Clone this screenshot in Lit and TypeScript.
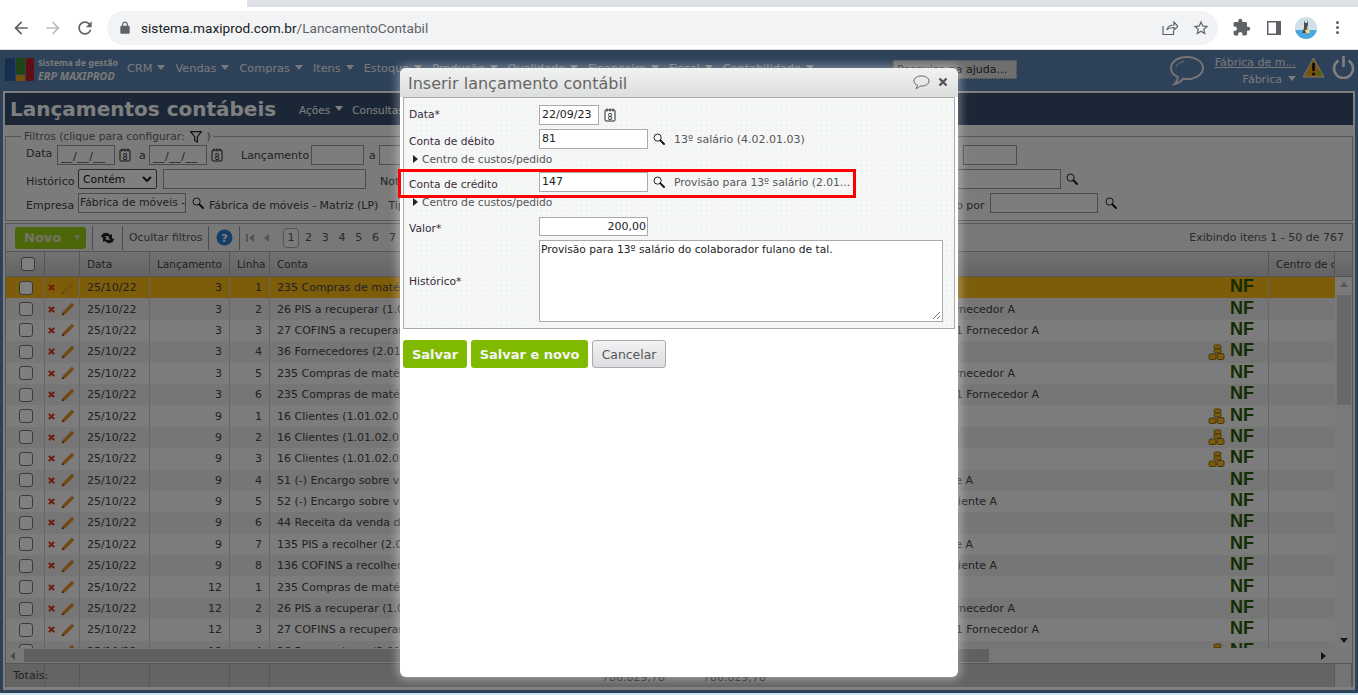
import { LitElement, html, css } from "lit";
import { customElement } from "lit/decorators.js";

type Row = { l: number; n: number; c: string; h?: string; e?: string; coin?: boolean };
const HF = "Compra de mercadoria NF 1 Fornecedor A";
const rows: Row[] = [
  { l: 3, n: 1, c: "235 Compras de matéria-prima" },
  { l: 3, n: 2, c: "26 PIS a recuperar (1.01.05.01)", h: HF, e: "e1" },
  { l: 3, n: 3, c: "27 COFINS a recuperar (1.01.05.02)", h: HF, e: "e2" },
  { l: 3, n: 4, c: "36 Fornecedores (2.01.01.01)", coin: true },
  { l: 3, n: 5, c: "235 Compras de matéria-prima", h: HF, e: "e1" },
  { l: 3, n: 6, c: "235 Compras de matéria-prima", h: HF, e: "e2" },
  { l: 9, n: 1, c: "16 Clientes (1.01.02.01)", coin: true },
  { l: 9, n: 2, c: "16 Clientes (1.01.02.01)", coin: true },
  { l: 9, n: 3, c: "16 Clientes (1.01.02.01)", coin: true },
  { l: 9, n: 4, c: "51 (-) Encargo sobre vendas", h: "Venda NF 2 Cliente A", e: "e3" },
  { l: 9, n: 5, c: "52 (-) Encargo sobre vendas", h: "Venda NF 2 Cliente A", e: "e4" },
  { l: 9, n: 6, c: "44 Receita da venda de produtos" },
  { l: 9, n: 7, c: "135 PIS a recolher (2.01.03.01)", h: "Venda NF 2 Cliente A", e: "e3" },
  { l: 9, n: 8, c: "136 COFINS a recolher (2.01.03.02)", h: "Venda NF 2 Cliente A", e: "e4" },
  { l: 12, n: 1, c: "235 Compras de matéria-prima" },
  { l: 12, n: 2, c: "26 PIS a recuperar (1.01.05.01)", h: HF, e: "e1" },
  { l: 12, n: 3, c: "27 COFINS a recuperar (1.01.05.02)", h: HF, e: "e2" },
  { l: 12, n: 4, c: "36 Fornecedores (2.01.01.01)", coin: true },
];

const search = () => html`<svg class="ico12" viewBox="0 0 12 14"><circle cx="4.600" cy="5.600" r="3.600" fill="#fff" fill-opacity=".35" stroke="#222" stroke-width="1"/><path d="M7.400 8.400l3.600 3.600" stroke="#111" stroke-width="1.900" stroke-linecap="round"/></svg>`;
const cal = () => html`<svg class="ico12" viewBox="0 0 12 14"><rect x="1" y="2" width="10" height="11" rx="1" fill="#fff" fill-opacity=".5" stroke="#222"/><path d="M3 .5v3M6 .5v3M9 .5v3" stroke="#222"/><text x="6" y="11.600" font-size="8" text-anchor="middle" font-family="DejaVu Sans" fill="#222">8</text></svg>`;
const pencil = () => html`<svg class="pen" viewBox="0 0 14 14"><path d="M10.800.8l2.400 2.400L4.200 12.200.8 13.200l1-3.400z" fill="#e8902a"/><path d="M.8 13.200l.7-2.400 1.700 1.700z" fill="#5a3a10"/></svg>`;
const cross = () => html`<svg class="x" viewBox="0 0 8 8"><path d="M1 1l6 6M7 1L1 7" stroke="#d83818" stroke-width="2.400"/></svg>`;
const coins = () => html`<svg class="coin" viewBox="0 0 17 17"><g fill="#f5b81c" stroke="#8a5c00" stroke-width=".9"><rect x="6" y="1" width="7" height="4" rx="1.500"/><rect x="6" y="5" width="7" height="4" rx="1.500"/><rect x="1" y="10" width="7" height="5.500" rx="1.500"/><rect x="9" y="9.500" width="7" height="6" rx="1.500"/></g></svg>`;

@customElement("app-root")
export class AppRoot extends LitElement {
  static styles = css`
    :host { display: block; width: 1358px; height: 695px; position: relative; overflow: hidden; background: #fff; font-family: "DejaVu Sans", sans-serif; font-size: 11px; color: #555; }
    * { box-sizing: border-box; }
    svg { display: block; flex: none; }
    .tabs { height: 7px; display: flex; }
    .tabs i { display: block; width: 247px; background: #fff; }
    .tabs b { display: block; flex: 1; background: #dee1e6; }
    .chrome { height: 43px; display: flex; align-items: center; padding: 0 0 1px 11px; background: #fff; border-bottom: 1px solid #dadce0; }
    .nb { width: 20px; height: 20px; fill: #5f6368; margin-right: 12px; }
    .nb.off { fill: #b9bcc0; }
    .omni { width: 1111px; height: 34px; border-radius: 17px; background: #f1f3f4; display: flex; align-items: center; padding-left: 12px; font: 13.650px Roboto, sans-serif; color: #202124; margin-right: 1px; }
    .omni .lock { width: 14px; height: 14px; fill: #5f6368; margin-right: 9px; margin-left: -1px; }
    .omni .path { color: #5f6368; }
    .omni .sp { flex: 1; }
    .omni .act { width: 18px; height: 18px; fill: #5f6368; }
    .a1 { margin-right: 14px; }
    .a2 { margin-right: 8px; }
    .ext { width: 19px; height: 19px; fill: #5f6368; margin-left: 13px; }
    .ava { width: 22px; height: 22px; border-radius: 50%; margin-left: 12px; background: linear-gradient(#cfe0ea 60%, #49a8dc 60%); display: flex; align-items: center; justify-content: center; }
    .kebab { margin-left: 19px; width: 4px; display: flex; flex-direction: column; gap: 2px; }
    .kebab i { display: block; width: 3px; height: 3px; border-radius: 50%; background: #5f6368; }

    .app { position: relative; height: 643px; background: #5a82b2; display: flex; flex-direction: column; overflow: hidden; }
    .pale { height: 2px; background: #cfe4ec; }
    .mask { position: absolute; inset: 0; background: rgba(0, 0, 0, .5); }

    .top { height: 41px; display: flex; align-items: flex-start; padding-left: 5px; flex: none; color: #f2f2f2; }
    .logo { width: 29px; height: 23px; margin-top: 8px; display: grid; grid-template-columns: 10px 9px 8px; column-gap: 1px; }
    .logo i { display: block; border-radius: 1px; }
    .lb { background: #2d5f9e; }
    .lg { display: grid !important; grid-template-rows: 16px 6px; row-gap: 1px; }
    .lg u { display: block; }
    .g1 { background: #3f8a2a; }
    .g2 { background: #e8a020; }
    .lr { background: #c02028; }
    .brand { margin-left: 4px; margin-top: 7px; width: 89px; color: #f2f2f2; font-family: "Noto Sans", sans-serif; font-weight: 700; line-height: 12px; white-space: nowrap; }
    .brand small { display: block; font-size: 8.800px; }
    .brand span { display: block; font-size: 10.700px; font-style: italic; margin-top: 1px; }
    .menu { display: flex; margin-top: 12px; font-size: 11.300px; white-space: nowrap; }
    .menu span { display: flex; align-items: center; gap: 5px; }
    .car { display: block; width: 0; height: 0; border: 4px solid transparent; border-top: 5px solid currentColor; border-bottom: 0; margin-top: -3px; }
    .mi { margin-right: 10px; }
    .helpbox { position: absolute; left: 893px; top: 10px; width: 124px; height: 19px; background: #ddd; border: 1px dotted #888; font-size: 11px; color: #333; padding-left: 3px; line-height: 17px; white-space: nowrap; overflow: hidden; }
    .topr { margin-left: auto; display: flex; align-items: flex-start; }
    .bub { width: 36px; height: 32px; margin-top: 5px; margin-left: 2px; }
    .fab { width: 84px; margin-left: 7px; margin-top: 4px; text-align: right; font-size: 11px; line-height: 17px; white-space: nowrap; }
    .fab u { display: block; }
    .fab span { display: flex; justify-content: flex-end; align-items: center; gap: 6px; }
    .warn { width: 23px; height: 21px; margin-left: 6px; margin-top: 7px; }
    .pow { width: 23px; height: 24px; margin-left: 7px; margin-right: 3px; margin-top: 5px; }

    .main { margin: 0 3px; height: 599px; background: #f6f7f6; border: 2px solid #fff; border-bottom-width: 3px; display: flex; flex-direction: column; flex: none; }
    .ttl { height: 32px; background: #364e6e; display: flex; align-items: center; flex: none; padding-left: 5px; color: #fff; white-space: nowrap; }
    .ttl h1 { margin: 0; font-size: 20px; font-weight: 700; width: 289px; color: #fff; }
    .ttl span { display: flex; align-items: center; gap: 5px; font-size: 10.500px; margin-right: 9px; padding-top: 1px; }
    fieldset { margin: 5px 0 0 0; padding: 0 0 7px 20px; height: 91px; border: 1px solid #aaa; flex: none; }
    legend { padding: 0 2px 0 3px; margin-left: -5px; margin-bottom: 2px; display: flex; align-items: center; gap: 5px; font-size: 10.700px; height: 13px; color: #666; white-space: nowrap; }
    .frow { display: flex; align-items: center; height: 20px; margin-bottom: 4px; white-space: nowrap; font-size: 11px; color: #444; }
    .t { display: block; }
    .up3 { margin-top: -4px; }
    .dn { margin-top: 5px; }
    .fi { display: block; height: 20px; border: 1px solid #999; background: #fafafa; color: #444; font-size: 10.800px; padding: 0 1px; line-height: 17px; overflow: hidden; white-space: nowrap; }
    .dt { padding: 2px 3px 0; letter-spacing: .6px; }
    .sel { display: flex; align-items: center; justify-content: space-between; border-color: #555; border-radius: 2px; background: #fff; color: #111; padding: 0 4px; }
    .w52 { width: 52px; } .w31 { width: 31px; } .w58 { width: 58px; } .w70 { width: 70px; } .w53 { width: 53px; } .w54 { width: 54px; } .w10 { width: 10px; } .w60 { width: 60px; } .w79 { width: 79px; } .w203 { width: 203px; } .w108 { width: 108px; } .w261 { width: 261px; } .w40 { width: 40px; }
    .m4 { margin-left: 4px; } .m5 { margin-left: 5px; } .m6 { margin-left: 6px; } .m7 { margin-left: 7px; } .m8 { margin-left: 8px; } .m10 { margin-left: 10px; } .m14 { margin-left: 14px; } .m18 { margin-left: 18px; } .m524 { margin-left: 524px; } .m380 { margin-left: 380px; }
    .ico12 { width: 12px; height: 14px; }
    .lanc { margin-left: 505px; margin-right: 5px; }

    .grid { flex: 1; margin-top: 2px; border: 1px solid #aaa; border-bottom: 0; min-height: 0; display: flex; flex-direction: column; }
    .bar { height: 28px; flex: none; display: flex; align-items: center; padding-left: 9px; font-size: 11px; color: #555; background: #f0f0f0; white-space: nowrap; border-bottom: 1px solid #aaa; }
    .novo { width: 71px; height: 22px; border-radius: 3px; background: #96ce14; color: #e7e7d0; font-weight: 700; font-size: 13px; display: flex; align-items: center; justify-content: space-between; padding: 0 6px 0 9px; margin-right: 6px; }
    .novo i { display: block; width: 0; height: 0; border: 3.500px solid transparent; border-top: 5px solid #d8d8b0; border-bottom: 0; }
    .sep { width: 1px; height: 24px; background: #999; flex: none; }
    .rf { width: 15px; height: 14px; margin: 0 7px; }
    .bar .of { padding: 0 6px; font-size: 10.800px; width: 85px; }
    .hp { width: 17px; height: 17px; margin: 0 6px 0 7px; }
    .pg { margin-left: 5px; width: 10px; height: 10px; fill: #aaa; }
    .pg2 { margin-left: 6px; margin-right: 12px; }
    .one { width: 16px; height: 20px; border: 1px solid #aaa; border-radius: 4px; text-align: center; line-height: 18px; background: #f4f4f4; margin-right: 1px; }
    .pn { width: 16.800px; text-align: center; }
    .exi { margin-left: auto; padding-right: 8px; color: #555; }

    .thead { height: 25px; flex: none; display: flex; background: linear-gradient(#e4e4e4, #c8c8cc); font-size: 10.500px; color: #444; border-bottom: 1px solid #aaa; }
    .c0 { width: 39px; } .c1 { width: 35px; } .c2 { width: 70px; } .c3 { width: 80px; } .c4 { width: 40px; } .c5 { width: 999px; } .c6 { width: 66px; } .c7 { width: 17px; }
    .cell { height: 100%; display: flex; align-items: center; border-right: 1px solid #aaa; flex: none; white-space: nowrap; overflow: hidden; }
    .pad { padding-left: 7px; }
    .ck { width: 14px; height: 14px; border: 1px solid #777; border-radius: 3px; background: #fff; margin-left: 13px; flex: none; }
    .thead .ck { margin-left: 15px; }
    .body { position: relative; height: 371px; flex: none; overflow: hidden; }
    .r { height: 21.400px; display: flex; font-size: 11px; color: #444; }
    .r.o { background: #fab814; }
    .r.a { background: #f9f9f8; }
    .r.b { background: #ebeceb; }
    .r .cell.c6 { border-right: 0; }
    .r .cell.nb-r { border-right: 1px solid #ccc; }
    .r.o .pen { opacity: .45; }
    .num { justify-content: flex-end; padding-right: 7px; }
    .x { width: 7px; height: 7px; margin-left: 3px; }
    .pen { width: 14px; height: 14px; margin-left: 6px; }
    .cc { width: 300px; flex: none; overflow: hidden; padding-left: 7px; }
    .hh { width: 600px; flex: none; text-align: right; overflow: hidden; }
    .e1 { padding-right: 155px; } .e2 { padding-right: 131px; } .e3 { padding-right: 197px; } .e4 { padding-right: 173px; }
    .cs { width: 60px; flex: none; display: flex; justify-content: flex-end; padding-right: 5px; }
    .coin { width: 17px; height: 17px; margin-top: 1px; }
    .nf { font: 700 18px/20px "Liberation Sans", sans-serif; color: #2a5a06; width: 30px; margin-top: -3px; }
    .vs { position: absolute; right: 0; top: 0; bottom: 0; width: 17px; background: #f4f4f4; display: flex; flex-direction: column; align-items: center; justify-content: space-between; padding: 5px 0; }
    .vs .th { position: absolute; left: 2px; top: 18px; width: 14px; height: 110px; background: #d0d0d0; }
    .tri { width: 0; height: 0; border: 4px solid transparent; }
    .tu { border-bottom: 5px solid #aaa; border-top: 0; }
    .td { border-top: 5px solid #333; border-bottom: 0; }
    .hs { height: 16px; flex: none; display: flex; align-items: center; background: #f0f0f0; border-bottom: 1px solid #aaa; padding: 0 4px; position: relative; }
    .hs .th { margin-left: 9px; width: 965px; height: 13px; background: #c0c0c0; }
    .tl { border-right: 5px solid #999; border-left: 0; }
    .tr { border-left: 5px solid #222; border-right: 0; margin-left: auto; margin-right: 22px; }
    .foot { flex: 1; display: flex; background: #c8c8c8; font-size: 11px; color: #444; }
    .foot .cell { border-right: 1px solid #b0b0b0; overflow: visible; }
    .footn { flex: 1; display: flex; padding-left: 332px; gap: 38px; align-items: center; padding-top: 3px; }
    .foot .c7 { width: 17px; background: #e8e8e8; margin-left: auto; }

    .modal { position: absolute; left: 400px; top: 18px; width: 558px; height: 609px; border-radius: 6px; background: #fff; box-shadow: 0 0 8px 3px rgba(255, 255, 255, .35); overflow: hidden; display: flex; flex-direction: column; }
    .mt { height: 29px; flex: none; padding: 6px 8px 0 8px; background: linear-gradient(#f1f2f2, #dcdddd); display: flex; font-size: 16px; color: #666; line-height: 20px; white-space: nowrap; align-items: flex-start; }
    .mt .sp { flex: 1; }
    .mt svg { margin-top: 1px; }
    .mbub { width: 17px; height: 15px; margin-right: 8px; }
    .mx { width: 10px; height: 10px; margin-top: 3px !important; margin-right: 2px; }
    .panel { margin: 0 3px; height: 232px; flex: none; border: 1px solid #aaa; background-color: #f5f7f7; background-image: radial-gradient(#e6eaea 0.600px, transparent 0.800px); background-size: 5px 5px; padding: 7px 11px 0 5px; color: #333; font-size: 11px; }
    .fr { display: flex; align-items: center; height: 20px; white-space: nowrap; }
    .fl { width: 130px; flex: none; color: #3a2a3a; font-size: 10.700px; padding-top: 4px; }
    .fl.up { padding-top: 0; margin-top: -1px; }
    .inp { display: block; height: 20px; border: 1px solid #aaa; background: #fff; color: #222; padding: 0 2px; line-height: 18px; font-size: 11px; }
    .i59 { width: 60px; } .i109 { width: 109px; }
    .rt { text-align: right; padding-right: 1px; }
    .h19 { height: 19px; }
    .fr .ico12 { margin-left: 5px; }
    .desc { margin-left: 9px; color: #555; }
    .d2 { font-size: 10.750px; }
    .cc2 { height: 14px; display: flex; align-items: center; gap: 4px; color: #555; padding-left: 4px; margin-top: 3px; font-size: 10.700px; }
    .cc2 i { display: block; width: 0; height: 0; border: 4px solid transparent; border-left: 5px solid #222; border-right: 0; }
    .g4 { margin-top: 4px; } .g6 { margin-top: 6px; } .g7 { margin-top: 7px; }
    .ta { width: 404px; height: 82px; border: 1px solid #aaa; background: #fff; color: #222; padding: 2px 1px; line-height: 14px; position: relative; font-size: 10.700px; }
    .ta svg { position: absolute; right: 1px; bottom: 1px; width: 9px; height: 9px; }
    .h82 { height: 82px; margin-top: 4px; }
    .h82 .fl { padding-top: 0; }
    .btns { display: flex; gap: 4px; margin: 11px 0 0 3px; }
    .bt { height: 28px; border-radius: 3px; background: #7fba00; color: #f4f4f4; font-weight: 700; font-size: 13px; display: flex; align-items: center; justify-content: center; }
    .b1 { width: 64px; } .b2 { width: 117px; }
    .b3 { width: 74px; background: linear-gradient(#f2f2f3, #dcdde0); border: 1px solid #aaa; color: #555; font-weight: 400; font-size: 12.400px; }
    .red { position: absolute; left: 398px; top: 169px; width: 458px; height: 29px; border: 3px solid #f00; }
  `;

  render() {
    return html`
      <div class="tabs"><i></i><b></b></div>
      <div class="chrome">
        <svg class="nb" viewBox="0 0 24 24"><path d="M20 11H7.830l5.590-5.590L12 4l-8 8 8 8 1.410-1.410L7.830 13H20v-2z"/></svg>
        <svg class="nb off" viewBox="0 0 24 24"><path d="M12 4l-1.410 1.410L16.170 11H4v2h12.170l-5.580 5.590L12 20l8-8z"/></svg>
        <svg class="nb" viewBox="0 0 24 24"><path d="M17.650 6.350C16.200 4.900 14.210 4 12 4c-4.420 0-7.990 3.580-7.990 8s3.570 8 7.990 8c3.730 0 6.840-2.550 7.730-6h-2.080c-.82 2.330-3.040 4-5.650 4-3.310 0-6-2.690-6-6s2.690-6 6-6c1.660 0 3.140.69 4.220 1.780L13 11h7V4l-2.350 2.350z"/></svg>
        <div class="omni">
          <svg class="lock" viewBox="0 0 24 24"><path d="M18 8h-1V6c0-2.760-2.240-5-5-5S7 3.240 7 6v2H6c-1.100 0-2 .9-2 2v10c0 1.100.9 2 2 2h12c1.100 0 2-.9 2-2V10c0-1.100-.9-2-2-2zM9 6c0-1.660 1.340-3 3-3s3 1.340 3 3v2H9V6z"/></svg>
          <span>sistema.maxiprod.com.br<span class="path">/LancamentoContabil</span></span>
          <span class="sp"></span>
          <svg class="act a1" viewBox="0 0 18 18"><path d="M3 7v8.500h10.500V12M7 11c.5-3 3-5 7-5V3l4 4.500L14 11V8.500c-3 0-5.500.5-7 2.500z" fill="none" stroke="#5f6368" stroke-width="1.200"/></svg>
          <svg class="act a2" viewBox="0 0 24 24"><path d="M22 9.240l-7.190-.62L12 2 9.190 8.630 2 9.240l5.460 4.730L5.820 21 12 17.270 18.180 21l-1.630-7.030L22 9.240zM12 15.400l-3.760 2.270 1-4.280-3.320-2.880 4.380-.38L12 6.100l1.710 4.040 4.380.38-3.320 2.880 1 4.280L12 15.400z"/></svg>
        </div>
        <svg class="ext" viewBox="0 0 24 24"><path d="M20.500 11H19V7c0-1.100-.9-2-2-2h-4V3.500C13 2.120 11.880 1 10.500 1S8 2.120 8 3.500V5H4c-1.100 0-1.990.9-1.990 2v3.800H3.500c1.490 0 2.700 1.210 2.700 2.700s-1.210 2.700-2.700 2.700H2V20c0 1.100.9 2 2 2h3.800v-1.500c0-1.490 1.210-2.700 2.700-2.700 1.490 0 2.700 1.210 2.700 2.700V22H17c1.100 0 2-.9 2-2v-4h1.500c1.380 0 2.500-1.120 2.500-2.500S21.880 11 20.500 11z"/></svg>
        <svg class="ext" viewBox="0 0 19 19"><path d="M3 3h14v14H3z" fill="#5f6368"/><path d="M4.500 4.500h7.500v11H4.500z" fill="#fff"/></svg>
        <div class="ava"><svg width="12" height="16" viewBox="0 0 12 16"><path d="M4 0l1 3h2l1-3v5l-1 3 3 5H2l2-5z" fill="#4d4d4d"/><path d="M5 10l4-1 1 4H6z" fill="#f3dc87"/></svg></div>
        <div class="kebab"><i></i><i></i><i></i></div>
      </div>
      <div class="app">
        <div class="top">
          <div class="logo">
            <i class="lb"></i>
            <i class="lg"><u class="g1"></u><u class="g2"></u></i>
            <i class="lr"></i>
          </div>
          <div class="brand"><small>Sistema de gestão</small><span>ERP MAXIPROD</span></div>
          <div class="menu">
            ${["CRM", "Vendas", "Compras", "Itens", "Estoque", "Produção", "Qualidade", "Financeiro", "Fiscal", "Contabilidade"].map(m => html`<span class="mi">${m}<i class="car"></i></span>`)}
          </div>
          <div class="helpbox">Pesquise na ajuda...</div>
          <div class="topr">
            <svg class="bub" viewBox="0 0 36 32"><path d="M18 2C9 2 2 6.500 2 13c0 4 3 7.500 7 9.200-.3 2.500-1.500 5-3.500 7 4-1 7-3.500 8.500-5.400 1.300.2 2.600.3 4 .3 9 0 16-5 16-11.100S27 2 18 2z" fill="none" stroke="#e8e8e8" stroke-width="2"/><path d="M7 12c1-3 4-5 8-5.500" fill="none" stroke="#e8e8e8"/></svg>
            <div class="fab"><u>Fábrica de m...</u><span>Fábrica<i class="car"></i></span></div>
            <svg class="warn" viewBox="0 0 23 21"><path d="M11.500 1L22 20H1z" fill="#f0a81c" stroke="#eee"/><path d="M11.500 6v8" stroke="#111" stroke-width="2.600"/><circle cx="11.500" cy="17" r="1.500" fill="#111"/><circle cx="17" cy="16" r="2.500" fill="#9ac81c"/></svg>
            <svg class="pow" viewBox="0 0 23 24"><path d="M6.500 5.500a9.500 9.500 0 1 0 10 0" fill="none" stroke="#fff" stroke-width="2.600"/><path d="M11.500 1v11" stroke="#fff" stroke-width="2.600"/></svg>
          </div>
        </div>
        <div class="main">
          <div class="ttl"><h1>Lançamentos contábeis</h1><span>Ações<i class="car"></i></span><span>Consultas</span></div>
          <fieldset>
            <legend>Filtros (clique para configurar:
              <svg width="12" height="12" viewBox="0 0 12 12"><path d="M.7.7h10.600L7.300 6v5L4.700 9.500V6z" fill="none" stroke="#222" stroke-width="1.200"/></svg>
              )</legend>
            <div class="frow">
              <span class="t w31 up3">Data</span><span class="fi dt w58">__/__/__</span><span class="m4">${cal()}</span>
              <span class="t m8 w10">a</span><span class="fi dt w58">__/__/__</span>
              <span class="m4">${cal()}</span><span class="t m18 w70">Lançamento</span><span class="fi w53"></span>
              <span class="t m5 w10">a</span><span class="fi w60"></span><span class="fi w54 m524"></span>
            </div>
            <div class="frow">
              <span class="t w52 dn">Histórico</span>
              <span class="fi sel w79">Contém<svg width="10" height="6" viewBox="0 0 10 6"><path d="M1 1l4 4 4-4" fill="none" stroke="#111" stroke-width="1.800"/></svg></span>
              <span class="fi w203 m6"></span><span class="t m14 w40 dn">Nota</span><span class="fi w261 m380"></span><span class="m5">${search()}</span>
            </div>
            <div class="frow">
              <span class="t w52 dn">Empresa</span><span class="fi w108">Fábrica de móveis -</span>
              <span class="m6">${search()}</span><span class="t m5 dn">Fábrica de móveis - Matriz (LP)</span>
              <span class="t m10 dn">Tipo</span><span class="t lanc dn">Lançado por</span><span class="fi w108"></span><span class="m7">${search()}</span>
            </div>
          </fieldset>
          <div class="grid">
            <div class="bar">
              <div class="novo">Novo<i></i></div>
              <span class="sep"></span>
              <svg class="rf" viewBox="0 0 15 14"><path d="M1 6a5 5 0 0 1 9-2l2-1v5H8l1.500-1.500A3 3 0 0 0 4 7zM14 8a5 5 0 0 1-9 2l-2 1V6h4L5.500 7.500A3 3 0 0 0 11 7z" fill="#222"/></svg>
              <span class="sep"></span>
              <span class="of">Ocultar filtros</span>
              <span class="sep"></span>
              <svg class="hp" viewBox="0 0 17 17"><circle cx="8.500" cy="8.500" r="8" fill="#2d7fd0"/><text x="8.500" y="12.500" text-anchor="middle" font-size="11" font-weight="700" font-family="DejaVu Sans" fill="#fff">?</text></svg>
              <span class="sep"></span>
              <svg class="pg" viewBox="0 0 10 10"><path d="M1 1h2v8H1zM9 1v8L4 5z"/></svg>
              <svg class="pg pg2" viewBox="0 0 10 10"><path d="M8 1v8L3 5z"/></svg>
              <span class="one">1</span>
              ${[2, 3, 4, 5, 6, 7].map(n => html`<span class="pn">${n}</span>`)}
              <span class="exi">Exibindo itens 1 - 50 de 767</span>
            </div>
            <div class="thead">
              <div class="cell c0"><span class="ck"></span></div>
              <div class="cell c1"></div>
              <div class="cell c2 pad">Data</div>
              <div class="cell c3 pad">Lançamento</div>
              <div class="cell c4 pad">Linha</div>
              <div class="cell c5 pad">Conta</div>
              <div class="cell c6 pad">Centro de custos</div>
            </div>
            <div class="body">
              ${rows.map((r, i) => html`
                <div class="r ${i === 0 ? "o" : i % 2 === 0 ? "a" : "b"}">
                  <div class="cell nb-r c0"><span class="ck"></span></div>
                  <div class="cell nb-r c1">${cross()}${pencil()}</div>
                  <div class="cell nb-r c2 pad">25/10/22</div>
                  <div class="cell nb-r c3 num">${r.l}</div>
                  <div class="cell nb-r c4 num">${r.n}</div>
                  <div class="cell nb-r c5">
                    <span class="cc">${r.c}</span>
                    <span class="hh ${r.e ?? ""}">${r.h ?? ""}</span>
                    <span class="cs">${r.coin ? coins() : ""}</span>
                    <span class="nf">NF</span>
                  </div>
                  <div class="cell c6"></div>
                </div>`)}
              <div class="vs"><i class="tri tu"></i><span class="th"></span><i class="tri td"></i></div>
            </div>
            <div class="hs"><i class="tri tl"></i><span class="th"></span><i class="tri tr"></i></div>
            <div class="foot">
              <div class="cell c0 pad">Totais:</div><div class="cell c1"></div><div class="cell c2"></div><div class="cell c3"></div><div class="cell c4"></div>
              <div class="footn"><span>786.829,78</span><span>786.829,78</span></div>
              <div class="cell c6"></div><div class="cell c7"></div>
            </div>
          </div>
        </div>
        <div class="mask"></div>
        <div class="modal">
          <div class="mt">Inserir lançamento contábil<span class="sp"></span>
            <svg class="mbub" viewBox="0 0 17 15"><path d="M8.500 1C4.300 1 1 3 1 6c0 2 1.500 3.500 3.500 4.300-.1 1.200-.7 2.200-1.500 3.200 2-.5 3.300-1.500 4-2.500.5.100 1 .1 1.500.1 4.200 0 7.500-2.200 7.500-5.100S12.700 1 8.500 1z" fill="none" stroke="#666" stroke-width="1"/></svg>
            <svg class="mx" viewBox="0 0 10 10"><path d="M1.500 1.500l7 7M8.500 1.500l-7 7" stroke="#555" stroke-width="2.400"/></svg>
          </div>
          <div class="panel">
            <div class="fr"><span class="fl up">Data*</span><span class="inp i59">22/09/23</span>${cal()}</div>
            <div class="fr g4"><span class="fl">Conta de débito</span><span class="inp i109">81</span>${search()}<span class="desc">13º salário (4.02.01.03)</span></div>
            <div class="cc2"><i></i>Centro de custos/pedido</div>
            <div class="fr g6"><span class="fl">Conta de crédito</span><span class="inp i109">147</span>${search()}<span class="desc d2">Provisão para 13º salário (2.01...</span></div>
            <div class="cc2"><i></i>Centro de custos/pedido</div>
            <div class="fr g7"><span class="fl">Valor*</span><span class="inp i109 rt h19">200,00</span></div>
            <div class="fr h82"><span class="fl">Histórico*</span><div class="ta">Provisão para 13º salário do colaborador fulano de tal.<svg viewBox="0 0 9 9"><path d="M8 1L1 8M8 5L5 8" stroke="#777"/></svg></div></div>
          </div>
          <div class="btns">
            <div class="bt b1">Salvar</div>
            <div class="bt b2">Salvar e novo</div>
            <div class="bt b3">Cancelar</div>
          </div>
        </div>
      </div>
      <div class="pale"></div>
      <div class="red"></div>
    `;
  }
}
